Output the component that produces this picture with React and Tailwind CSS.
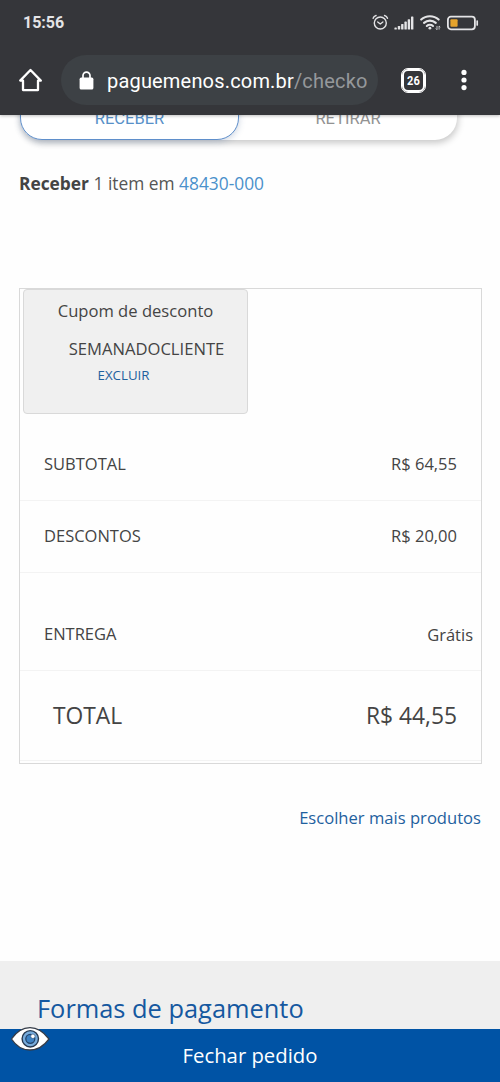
const StatusBar = () => (
  <div className="flex h-[45px] items-center justify-between pl-[23px] pr-5 text-[#e4e4e6]">
    <span className="font-[Roboto,sans-serif] text-[16px] font-bold leading-none">15:56</span>
    <div className="flex items-center">
      <AlarmIcon />
      <SignalIcon />
      <WifiIcon />
      <BatteryIcon />
    </div>
  </div>
);

const AlarmIcon = () => (
  <svg className="h-[17px] w-[17px]" viewBox="0 0 17 17" fill="none" stroke="currentColor" aria-hidden="true">
    <circle cx="8.3" cy="9" r="6" strokeWidth="1.4" />
    <path d="M5.7 7.9 8.3 10l2.6-2.1" strokeWidth="1.3" strokeLinecap="round" strokeLinejoin="round" />
    <path d="M1.1 4.3C1.5 3 2.6 1.9 4.1 1.5M15.5 4.3c-.4-1.3-1.5-2.4-3-2.8" strokeWidth="1.4" strokeLinecap="round" />
  </svg>
);

const SignalIcon = () => (
  <svg className="ml-[5px] h-[14px] w-[20px]" viewBox="0 0 20 14" fill="currentColor" aria-hidden="true">
    <rect x="0.4" y="11.6" width="2.4" height="1.9" rx="0.6" />
    <rect x="3.8" y="10" width="2.4" height="3.5" rx="0.6" />
    <rect x="7.1" y="7.9" width="2.4" height="5.6" rx="0.6" />
    <rect x="10.4" y="5.6" width="2.4" height="7.9" rx="0.6" />
    <rect x="13.7" y="3.2" width="2.4" height="10.3" rx="0.6" />
    <rect x="17" y="0.5" width="2.4" height="13" rx="0.6" />
  </svg>
);

const WifiIcon = () => (
  <svg className="ml-[6px] h-[17px] w-[21px]" viewBox="0 0 21 17" fill="none" stroke="currentColor" aria-hidden="true">
    <path d="M1.2 5.6c4.8-4.5 12.6-4.5 17.4 0" strokeWidth="2.1" strokeLinecap="round" />
    <path d="M4 8.9c3.3-3 8.5-3 11.8 0" strokeWidth="2.1" strokeLinecap="round" />
    <path d="M6.8 12c1.7-1.5 4.5-1.5 6.2 0" strokeWidth="2.1" strokeLinecap="round" />
    <circle cx="9.9" cy="14.2" r="1.4" fill="currentColor" stroke="none" />
    <path d="M17 12v3.6m-1.2-1.1 1.2 1.3M19.1 15.6V12m1.2 1.2L19.1 12" strokeWidth="0.8" />
  </svg>
);

const BatteryIcon = () => (
  <svg className="ml-[5px] mr-px h-[16px] w-[33px]" viewBox="0 0 33 16" fill="none" aria-hidden="true">
    <rect x="1.9" y="1.7" width="27" height="12.6" rx="3" stroke="currentColor" strokeWidth="1.8" />
    <rect x="4.4" y="4.3" width="7.2" height="7.4" rx="1" fill="#e5a32c" />
    <path d="M31.2 6v4" stroke="currentColor" strokeWidth="1.7" strokeLinecap="round" />
  </svg>
);

const BrowserBar = () => (
  <div className="flex h-[70px] items-center text-white">
    <svg className="ml-[18px] h-[26px] w-[26px]" viewBox="0 0 26 26" fill="none" stroke="currentColor" aria-hidden="true">
      <path d="M2.2 13.6 12.5 3l10.3 10.6H20v9.500H5v-9.500z" strokeWidth="2.3" strokeLinejoin="round" />
    </svg>
    <div className="ml-[17px] flex h-[50px] w-[317px] items-center rounded-full bg-[#3d4145] pl-[18px]">
      <svg className="h-[19px] w-[15px]" viewBox="0 0 15 19" fill="none" aria-hidden="true">
        <rect x="0.6" y="6.6" width="13.8" height="12" rx="1.6" fill="currentColor" />
        <path d="M4 7.5V4.6a3.5 3.5 0 0 1 7 0v2.9" stroke="currentColor" strokeWidth="1.7" />
      </svg>
      <span className="ml-[13px] whitespace-nowrap pt-[2px] font-[Roboto,sans-serif] text-[20px] tracking-[0.18px]">
        paguemenos.com.br<span className="text-[#95989b]">/checko</span>
      </span>
    </div>
    <div className="ml-[24px] flex h-[23px] w-[23px] items-center justify-center rounded-[6px] border-2 border-white font-[Roboto,sans-serif] text-[13px] font-bold leading-none outline-[0.5px] outline-white">
      <span className="scale-x-85">26</span>
    </div>
    <svg className="ml-[35px] h-[22px] w-[8px]" viewBox="0 0 8 22" fill="currentColor" aria-hidden="true">
      <circle cx="4" cy="3.4" r="2.6" />
      <circle cx="4" cy="11" r="2.6" />
      <circle cx="4" cy="18.6" r="2.6" />
    </svg>
  </div>
);

const DeliveryTabs = () => (
  <div className="-mt-[25px] ml-5 flex h-[50px] w-[437px] rounded-b-[22px] bg-white font-[Roboto,sans-serif] text-[16.500px] shadow-[1px_3px_7px_rgba(0,0,0,0.22)]">
    <button
      type="button"
      className="flex w-[219px] items-center justify-center rounded-b-[22px] border border-[#5f8fcb] bg-white pt-[8px] text-[#5790c8] shadow-[0_2px_6px_rgba(60,90,140,0.25)]"
    >
      RECEBER
    </button>
    <button type="button" className="flex flex-1 items-center justify-center pt-[8px] text-[#929292]">
      RETIRAR
    </button>
  </div>
);

const Coupon = () => (
  <div className="ml-[3px] flex h-[125px] w-[225px] flex-col items-center rounded-[4px] border border-[#d9d9d9] bg-[#f0f0f0] text-[#444]">
    <span className="mt-[9px] text-[16.600px] leading-6">Cupom de desconto</span>
    <span className="ml-[22px] mt-[14px] text-[16.600px] leading-6">SEMANADOCLIENTE</span>
    <button type="button" className="mr-[24px] mt-[2px] text-[13.300px] leading-6 text-[#1f619e]">
      EXCLUIR
    </button>
  </div>
);

const rows = [
  { label: 'SUBTOTAL', value: 'R$ 64,55', className: 'h-[87px] pt-[14px] pl-6 pr-6' },
  { label: 'DESCONTOS', value: 'R$ 20,00', className: 'h-[72px] pl-6 pr-6' },
  { label: 'ENTREGA', value: 'Grátis', className: 'h-[98px] pt-[25px] pl-6 pr-[8px]', valueClassName: 'pt-[2px]' },
];

const OrderSummary = () => (
  <section className="ml-[19px] mt-[93px] h-[476px] w-[463px] border border-[#d9d9d9] text-[#444]">
    <Coupon />
    {rows.map((row) => (
      <div
        key={row.label}
        className={`flex items-center justify-between border-b border-[#f3f3f3] text-[16.500px] ${row.className}`}
      >
        <span>{row.label}</span>
        <span className={row.valueClassName}>{row.value}</span>
      </div>
    ))}
    <div className="flex h-[90px] items-center justify-between border-b border-[#f3f3f3] pl-[33px] pr-6 pt-[2px] text-[22.800px]">
      <span>TOTAL</span>
      <span>{'R$ 44,55'}</span>
    </div>
  </section>
);

const EyeIcon = () => (
  <svg className="absolute left-[10px] top-[-3px] h-[26px] w-[40px]" viewBox="0 0 40 26" fill="none" aria-hidden="true">
    <path d="M1.500 13C6 6.500 12.500 1.700 20 1.700S34 6.500 39 13C34 20 27.500 24 20 24S6 20 1.500 13z" fill="#fff" stroke="#353c48" strokeWidth="1.300" strokeLinejoin="round" />
    <circle cx="20.300" cy="12.800" r="8.200" fill="#78acdc" stroke="#26384f" strokeWidth="1.400" />
    <circle cx="20.300" cy="12.800" r="4.500" fill="#3d82c4" stroke="#23466e" strokeWidth="1.300" />
    <circle cx="22.900" cy="10.300" r="2.200" fill="#fff" stroke="#23466e" strokeWidth="0.600" />
  </svg>
);

const CheckoutFooter = () => (
  <footer className="relative flex h-[53px] items-center justify-center bg-[#0053a5] text-[20.300px] text-white">
    <EyeIcon />
    <button type="button">Fechar pedido</button>
  </footer>
);

export default function App() {
  return (
    <div className="flex h-[1082px] w-[500px] flex-col overflow-hidden bg-[#fefefe] font-['Open_Sans',sans-serif]">
      <header className="relative z-10 h-[115px] shrink-0 bg-[#35363a] shadow-[0_1px_3px_rgba(0,0,0,0.25)]">
        <StatusBar />
        <BrowserBar />
      </header>
      <main className="flex-1">
        <DeliveryTabs />
        <p className="ml-[19px] mt-[31px] whitespace-nowrap text-[17.350px] leading-6 text-[#555]">
          <strong className="font-bold text-[#444]">Receber</strong> 1 item em{' '}
          <span className="text-[#4a90cb]">48430-000</span>
        </p>
        <OrderSummary />
        <a className="mr-[19px] mt-[42px] block text-right text-[16.600px] leading-6 text-[#1f619e]">
          Escolher mais produtos
        </a>
      </main>
      <section className="h-[68px] shrink-0 bg-[#efefef] pl-[37px] pt-[29px]">
        <h2 className="text-[25.400px] leading-9 text-[#1558a0]">Formas de pagamento</h2>
      </section>
      <CheckoutFooter />
    </div>
  );
}
